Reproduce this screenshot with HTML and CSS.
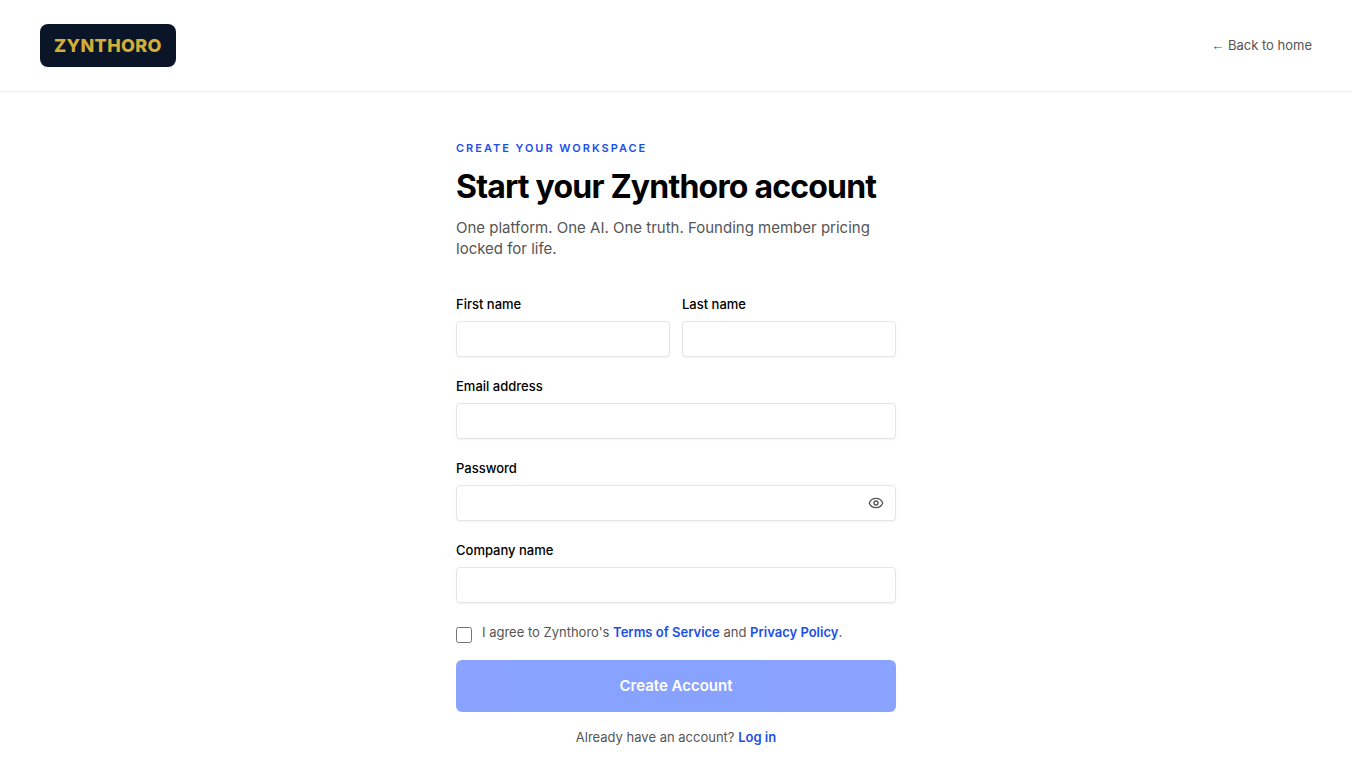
FILE: index.html
```html
<!DOCTYPE html>
<html lang="en">
<head>
  <meta charset="UTF-8">
  <meta name="viewport" content="width=device-width, initial-scale=1.0">
  <title>Create account - Zynthoro</title>
  <link rel="stylesheet" href="styles.css">
</head>
<body>

<header class="header">
  <a class="logo" href="#">ZYNTHORO</a>
  <a class="back-link" href="#"><span class="arrow">←</span> Back to home</a>
</header>

<main class="signup">
  <p class="eyebrow">CREATE YOUR WORKSPACE</p>
  <h1>Start your Zynthoro account</h1>
  <p class="intro">One platform. One AI. One truth. Founding member pricing locked for life.</p>

  <form class="form" id="signup-form">
    <div class="name-row">
      <div class="field">
        <label for="first-name">First name</label>
        <input type="text" id="first-name" autocomplete="given-name">
      </div>
      <div class="field">
        <label for="last-name">Last name</label>
        <input type="text" id="last-name" autocomplete="family-name">
      </div>
    </div>
    <div class="field">
      <label for="email">Email address</label>
      <input type="email" id="email" autocomplete="email">
    </div>
    <div class="field">
      <label for="password">Password</label>
      <div class="password-box">
        <input type="password" id="password" autocomplete="new-password">
        <button type="button" class="eye" id="eye" aria-label="Show password">
          <svg width="16" height="16" viewBox="0 0 24 24" fill="none" stroke="currentColor" stroke-width="2" stroke-linecap="round" stroke-linejoin="round">
            <path d="M2.062 12.348a1 1 0 0 1 0-.696 10.75 10.75 0 0 1 19.876 0 1 1 0 0 1 0 .696 10.75 10.75 0 0 1-19.876 0"/>
            <circle cx="12" cy="12" r="3"/>
          </svg>
        </button>
      </div>
    </div>
    <div class="field">
      <label for="company">Company name</label>
      <input type="text" id="company" autocomplete="organization">
    </div>
    <div class="terms">
      <input type="checkbox" id="agree">
      <label for="agree">I agree to Zynthoro's <a href="#">Terms of Service</a> and <a href="#">Privacy Policy</a>.</label>
    </div>
    <button type="submit" class="submit" id="submit" disabled>Create Account</button>
  </form>

  <p class="login">Already have an account? <a href="#">Log in</a></p>
</main>

<script>
  var password = document.getElementById('password');
  var eye = document.getElementById('eye');
  var agree = document.getElementById('agree');
  var submit = document.getElementById('submit');

  eye.onclick = function () {
    var hidden = password.type === 'password';
    password.type = hidden ? 'text' : 'password';
    eye.setAttribute('aria-label', hidden ? 'Hide password' : 'Show password');
  };

  // button stays off until the terms are accepted
  agree.onchange = function () {
    submit.disabled = !agree.checked;
  };
</script>

</body>
</html>
```
FILE: styles.css
```css
* {
  box-sizing: border-box;
}
body {
  margin: 0;
  font-family: Inter, sans-serif;
  font-size: 13px;
  line-height: 18px;
  color: #000;
  background: #fff;
}
a {
  color: #1d4ee8;
  font-weight: 600;
  text-decoration: none;
}
h1,
p {
  margin: 0;
}
.header {
  display: flex;
  justify-content: space-between;
  align-items: center;
  padding: 24px 40px;
  border-bottom: 1px solid #ebebeb;
}
.logo {
  padding: 10px 14px;
  border-radius: 8px;
  background: #0a1628;
  color: #d4af37;
  font-size: 18px;
  font-weight: 800;
  line-height: 23px;
  letter-spacing: 0.02em;
}
.back-link {
  color: #555;
  font-weight: 400;
}
.arrow {
  font-family: "Liberation Sans", sans-serif;
}
.signup {
  max-width: 488px;
  margin: 0 auto;
  padding: 48px 24px 12px;
}
.eyebrow {
  margin-bottom: 12px;
  color: #1d4ee8;
  font-size: 11px;
  font-weight: 600;
  line-height: 16px;
  letter-spacing: 0.18em;
}
h1 {
  margin-bottom: 12px;
  font-size: 32px;
  font-weight: 700;
  line-height: 37px;
  letter-spacing: -0.025em;
}
.intro {
  margin-bottom: 36px;
  color: #555;
  font-size: 15px;
  line-height: 21px;
}
.form {
  display: flex;
  flex-direction: column;
  gap: 20px;
}
.name-row {
  display: grid;
  grid-template-columns: 1fr 1fr;
  gap: 12px;
}
.field {
  display: flex;
  flex-direction: column;
  gap: 8px;
}
.field label {
  font-weight: 500;
}
.field input {
  width: 100%;
  height: 36px;
  padding: 4px 12px;
  border: 1px solid #e5e5e5;
  border-radius: 4px;
  background: #fff;
  box-shadow: 0 1px 2px rgba(0, 0, 0, 0.05);
  font: inherit;
}
.password-box {
  position: relative;
}
.password-box input {
  padding-right: 40px;
}
.eye {
  position: absolute;
  top: 0;
  right: 0;
  display: flex;
  align-items: center;
  height: 36px;
  padding: 0 12px;
  border: none;
  background: none;
  color: #555;
  cursor: pointer;
}
.terms {
  display: flex;
  align-items: flex-start;
  gap: 10px;
  color: #555;
}
.terms input {
  width: 16px;
  height: 16px;
  margin: 4px 0 0;
}
.submit {
  height: 52px;
  margin-top: -3px;
  border: none;
  border-radius: 6px;
  background: #1447ff;
  color: #fff;
  font: 600 15px/20px Inter, sans-serif;
  cursor: pointer;
}
.submit:disabled {
  opacity: 0.5;
  cursor: default;
}
.login {
  margin-top: 16px;
  color: #555;
  text-align: center;
}
```
